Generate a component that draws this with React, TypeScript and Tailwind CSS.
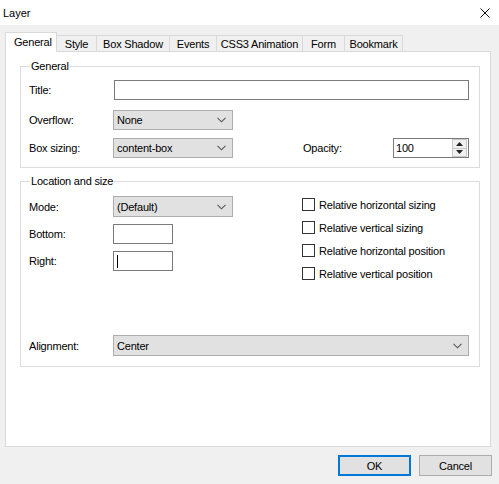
import React from "react";

const Chevron = () => (
  <svg width="9" height="6" viewBox="0 0 9 6" className="shrink-0">
    <path d="M0.5 0.8 L4.5 4.8 L8.5 0.8" fill="none" stroke="#555" strokeWidth="1.1" />
  </svg>
);

function Select({ value, w }: { value: string; w: string }) {
  return (
    <div className={`${w} h-[20px] bg-[#e1e1e1] border border-[#adadad] flex items-center justify-between pl-[3px] pr-[6px]`}>
      <span>{value}</span>
      <Chevron />
    </div>
  );
}

function Check({ label }: { label: string }) {
  return (
    <div className="h-[23px] flex items-center">
      <div className="w-[13px] h-[13px] border border-[#333] bg-white" />
      <span className="ml-[4px]">{label}</span>
    </div>
  );
}

const tabs: { name: string; w: string }[] = [
  { name: "Style", w: "w-[40px]" },
  { name: "Box Shadow", w: "w-[73px]" },
  { name: "Events", w: "w-[47px]" },
  { name: "CSS3 Animation", w: "w-[86px]" },
  { name: "Form", w: "w-[42px]" },
  { name: "Bookmark", w: "w-[58px]" },
];

export default function App() {
  return (
    <div className="w-[499px] h-[484px] bg-[#f0f0f0] flex flex-col font-['Liberation_Sans',Arial,sans-serif] text-[11px] tracking-[-0.2px] text-black leading-[14px]">
      {/* title bar */}
      <div className="h-[25px] bg-white flex items-center justify-between pl-[3px] pr-[9px] shrink-0">
        <span className="text-[11px] tracking-normal">Layer</span>
        <svg width="10" height="10" viewBox="0 0 10 10">
          <path d="M0.5 0.5 L9.5 9.5 M9.5 0.5 L0.5 9.5" stroke="#111" strokeWidth="1" />
        </svg>
      </div>

      {/* tab strip */}
      <div className="pt-[7px] pl-[5px] shrink-0">
        <div className="h-[19px] flex items-end">
          <div className="relative z-10 -mb-[1px] h-[20px] w-[52px] bg-white border-x border-t border-[#d9d9d9] flex items-center pl-[8px] pb-[1px]">
            General
          </div>
          {tabs.map((t) => (
            <div
              key={t.name}
              className={`${t.w} h-[16px] border-t border-r border-[#d9d9d9] flex items-center justify-center`}
            >
              {t.name}
            </div>
          ))}
        </div>
      </div>

      {/* panel */}
      <div className="ml-[5px] w-[486px] h-[396px] bg-white border border-[#d9d9d9] shrink-0 pl-[14px]">
        {/* General group */}
        <fieldset className="mt-[7px] w-[460px] border border-[#dcdcdc] pl-[8px] pr-[10px] pb-[9px]">
          <legend className="ml-[1px] px-[1px] leading-[14px]">General</legend>
          <div className="mt-[7px] flex items-center h-[20px]">
            <span className="w-[85px]">Title:</span>
            <div className="flex-1 h-[20px] border border-[#7a7a7a] bg-white" />
          </div>
          <div className="mt-[10px] flex items-center h-[20px]">
            <span className="w-[84px]">Overflow:</span>
            <Select value="None" w="w-[120px]" />
          </div>
          <div className="mt-[8px] flex items-center h-[20px]">
            <span className="w-[84px]">Box sizing:</span>
            <Select value="content-box" w="w-[120px]" />
            <span className="ml-[70px] w-[90px]">Opacity:</span>
            <div className="w-[76px] h-[20px] border border-[#7a7a7a] bg-white flex items-center justify-between pl-[2px] pr-[1px]">
              <span>100</span>
              <div className="w-[15px] h-[18px] flex flex-col">
                <div className="flex-1 bg-[#f0f0f0] border border-[#c8c8c8] flex items-center justify-center">
                  <svg width="7" height="4" viewBox="0 0 7 4"><path d="M3.5 0 L7 4 L0 4 Z" fill="#222" /></svg>
                </div>
                <div className="flex-1 bg-[#f0f0f0] border-x border-b border-[#c8c8c8] flex items-center justify-center">
                  <svg width="7" height="4" viewBox="0 0 7 4"><path d="M0 0 L7 0 L3.5 4 Z" fill="#222" /></svg>
                </div>
              </div>
            </div>
          </div>
        </fieldset>

        {/* Location and size group */}
        <fieldset className="mt-[6px] w-[460px] border border-[#dcdcdc] pl-[8px] pr-[10px] pb-[10px]">
          <legend className="ml-[1px] px-[1px] leading-[14px]">Location and size</legend>
          <div className="flex items-start">
            <div className="flex flex-col pt-[8px]">
              <div className="flex items-center h-[21px]">
                <span className="w-[84px]">Mode:</span>
                <Select value="(Default)" w="w-[120px] h-[21px]" />
              </div>
              <div className="mt-[7px] flex items-center h-[20px]">
                <span className="w-[84px]">Bottom:</span>
                <div className="w-[60px] h-[20px] border border-[#7a7a7a] bg-white" />
              </div>
              <div className="mt-[7px] flex items-center h-[20px]">
                <span className="w-[84px]">Right:</span>
                <div className="w-[60px] h-[20px] border border-[#7a7a7a] bg-white flex items-center pl-[3px]">
                  <div className="w-[1px] h-[13px] bg-black" />
                </div>
              </div>
            </div>
            <div className="ml-[69px] pt-[5px] flex flex-col">
              <Check label="Relative horizontal sizing" />
              <Check label="Relative vertical sizing" />
              <Check label="Relative horizontal position" />
              <Check label="Relative vertical position" />
            </div>
          </div>
          <div className="mt-[50px] flex items-center h-[21px]">
            <span className="w-[84px]">Alignment:</span>
            <Select value="Center" w="flex-1 h-[21px]" />
          </div>
        </fieldset>
      </div>

      {/* buttons */}
      <div className="mt-[8px] flex justify-end gap-[8px] pr-[7px]">
        <button className="w-[73px] h-[21px] bg-[#e1e1e1] border-2 border-[#0078d7] flex items-center justify-center">
          OK
        </button>
        <button className="w-[73px] h-[21px] bg-[#e1e1e1] border border-[#adadad] flex items-center justify-center">
          Cancel
        </button>
      </div>
    </div>
  );
}
